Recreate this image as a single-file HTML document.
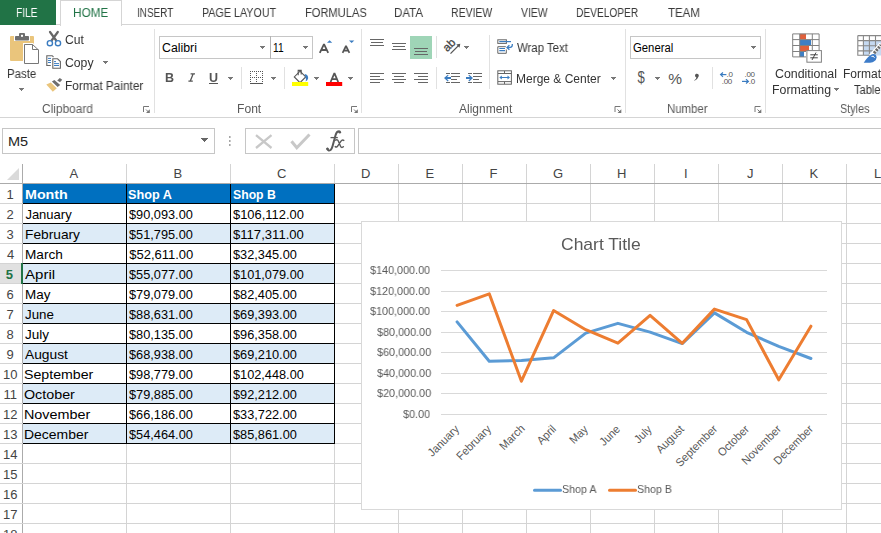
<!DOCTYPE html>
<html><head><meta charset='utf-8'><style>
html,body{margin:0;padding:0;width:881px;height:533px;overflow:hidden;background:#fff;position:relative;font-family:"Liberation Sans",sans-serif}
.t{position:absolute;white-space:pre;transform-origin:0 0;font-family:"Liberation Sans",sans-serif}
</style></head><body>
<div style='position:absolute;left:0px;top:24px;width:881px;height:1px;background:#d5d5d5;'></div><div style='position:absolute;left:0px;top:0px;width:56px;height:25px;background:#217346;'></div><div style='position:absolute;left:60px;top:0px;width:60px;height:25px;background:#fff;border:1px solid #d5d5d5;border-bottom:none'></div><div style='position:absolute;left:0px;top:117px;width:881px;height:1px;background:#d5d5d5;'></div><div style='position:absolute;left:154px;top:29px;width:1px;height:84px;background:#e1e1e1;'></div><div style='position:absolute;left:361px;top:29px;width:1px;height:84px;background:#e1e1e1;'></div><div style='position:absolute;left:625px;top:29px;width:1px;height:84px;background:#e1e1e1;'></div><div style='position:absolute;left:765px;top:29px;width:1px;height:84px;background:#e1e1e1;'></div><div style='position:absolute;left:209px;top:83px;width:9px;height:1.2px;background:#555;'></div><div style='position:absolute;left:159px;top:36px;width:154px;height:23px;border:1px solid #c6c6c6;box-sizing:border-box'></div><div style='position:absolute;left:270px;top:36px;width:1px;height:23px;background:#b4b4b4;'></div><div style='position:absolute;left:630px;top:36px;width:131px;height:23px;border:1px solid #c6c6c6;box-sizing:border-box'></div><div style='position:absolute;left:2px;top:128px;width:213px;height:26px;border:1px solid #c6c6c6;box-sizing:border-box'></div><div style='position:absolute;left:245px;top:128px;width:110px;height:26px;border:1px solid #c6c6c6;box-sizing:border-box'></div><div style='position:absolute;left:358px;top:128px;width:540px;height:26px;border:1px solid #c6c6c6;box-sizing:border-box'></div><div style='position:absolute;left:126px;top:164px;width:1px;height:369px;background:#d4d4d4;'></div><div style='position:absolute;left:230px;top:164px;width:1px;height:369px;background:#d4d4d4;'></div><div style='position:absolute;left:334px;top:164px;width:1px;height:369px;background:#d4d4d4;'></div><div style='position:absolute;left:398px;top:164px;width:1px;height:369px;background:#d4d4d4;'></div><div style='position:absolute;left:462px;top:164px;width:1px;height:369px;background:#d4d4d4;'></div><div style='position:absolute;left:526px;top:164px;width:1px;height:369px;background:#d4d4d4;'></div><div style='position:absolute;left:590px;top:164px;width:1px;height:369px;background:#d4d4d4;'></div><div style='position:absolute;left:654px;top:164px;width:1px;height:369px;background:#d4d4d4;'></div><div style='position:absolute;left:718px;top:164px;width:1px;height:369px;background:#d4d4d4;'></div><div style='position:absolute;left:782px;top:164px;width:1px;height:369px;background:#d4d4d4;'></div><div style='position:absolute;left:846px;top:164px;width:1px;height:369px;background:#d4d4d4;'></div><div style='position:absolute;left:22px;top:164px;width:1px;height:369px;background:#ababab;'></div><div style='position:absolute;left:0px;top:183px;width:881px;height:1px;background:#ababab;'></div><div style='position:absolute;left:0px;top:203px;width:881px;height:1px;background:#d4d4d4;'></div><div style='position:absolute;left:0px;top:223px;width:881px;height:1px;background:#d4d4d4;'></div><div style='position:absolute;left:0px;top:243px;width:881px;height:1px;background:#d4d4d4;'></div><div style='position:absolute;left:0px;top:263px;width:881px;height:1px;background:#d4d4d4;'></div><div style='position:absolute;left:0px;top:283px;width:881px;height:1px;background:#d4d4d4;'></div><div style='position:absolute;left:0px;top:303px;width:881px;height:1px;background:#d4d4d4;'></div><div style='position:absolute;left:0px;top:323px;width:881px;height:1px;background:#d4d4d4;'></div><div style='position:absolute;left:0px;top:343px;width:881px;height:1px;background:#d4d4d4;'></div><div style='position:absolute;left:0px;top:363px;width:881px;height:1px;background:#d4d4d4;'></div><div style='position:absolute;left:0px;top:383px;width:881px;height:1px;background:#d4d4d4;'></div><div style='position:absolute;left:0px;top:403px;width:881px;height:1px;background:#d4d4d4;'></div><div style='position:absolute;left:0px;top:423px;width:881px;height:1px;background:#d4d4d4;'></div><div style='position:absolute;left:0px;top:443px;width:881px;height:1px;background:#d4d4d4;'></div><div style='position:absolute;left:0px;top:463px;width:881px;height:1px;background:#d4d4d4;'></div><div style='position:absolute;left:0px;top:483px;width:881px;height:1px;background:#d4d4d4;'></div><div style='position:absolute;left:0px;top:503px;width:881px;height:1px;background:#d4d4d4;'></div><div style='position:absolute;left:0px;top:523px;width:881px;height:1px;background:#d4d4d4;'></div><svg style='position:absolute;left:0;top:164px' width='22' height='19'><polygon points='19,4 19,16 7,16' fill='#dadada'/></svg><div style='position:absolute;left:0px;top:264px;width:21px;height:19px;background:#e1e1e1;'></div><div style='position:absolute;left:21px;top:263px;width:2px;height:21px;background:#217346;'></div><div style='position:absolute;left:23px;top:184px;width:311px;height:19px;background:#0070c0;'></div><div style='position:absolute;left:23px;top:224px;width:311px;height:19px;background:#ddebf7;'></div><div style='position:absolute;left:23px;top:264px;width:311px;height:19px;background:#ddebf7;'></div><div style='position:absolute;left:23px;top:304px;width:311px;height:19px;background:#ddebf7;'></div><div style='position:absolute;left:23px;top:344px;width:311px;height:19px;background:#ddebf7;'></div><div style='position:absolute;left:23px;top:384px;width:311px;height:19px;background:#ddebf7;'></div><div style='position:absolute;left:23px;top:424px;width:311px;height:19px;background:#ddebf7;'></div><div style='position:absolute;left:23px;top:203px;width:312px;height:1px;background:#000;'></div><div style='position:absolute;left:23px;top:223px;width:312px;height:1px;background:#000;'></div><div style='position:absolute;left:23px;top:243px;width:312px;height:1px;background:#000;'></div><div style='position:absolute;left:23px;top:263px;width:312px;height:1px;background:#000;'></div><div style='position:absolute;left:23px;top:283px;width:312px;height:1px;background:#000;'></div><div style='position:absolute;left:23px;top:303px;width:312px;height:1px;background:#000;'></div><div style='position:absolute;left:23px;top:323px;width:312px;height:1px;background:#000;'></div><div style='position:absolute;left:23px;top:343px;width:312px;height:1px;background:#000;'></div><div style='position:absolute;left:23px;top:363px;width:312px;height:1px;background:#000;'></div><div style='position:absolute;left:23px;top:383px;width:312px;height:1px;background:#000;'></div><div style='position:absolute;left:23px;top:403px;width:312px;height:1px;background:#000;'></div><div style='position:absolute;left:23px;top:423px;width:312px;height:1px;background:#000;'></div><div style='position:absolute;left:23px;top:443px;width:312px;height:1px;background:#000;'></div><div style='position:absolute;left:126px;top:184px;width:1px;height:260px;background:#000;'></div><div style='position:absolute;left:230px;top:184px;width:1px;height:260px;background:#000;'></div><div style='position:absolute;left:334px;top:184px;width:1px;height:260px;background:#000;'></div><div style='position:absolute;left:361px;top:221px;width:481px;height:289px;background:#fff;border:1px solid #d9d9d9;box-sizing:border-box'></div><svg style='position:absolute;left:0;top:0' width='881' height='533'><rect x='441' y='414' width='386' height='1' fill='#d9d9d9'/><rect x='441' y='393' width='386' height='1' fill='#d9d9d9'/><rect x='441' y='373' width='386' height='1' fill='#d9d9d9'/><rect x='441' y='352' width='386' height='1' fill='#d9d9d9'/><rect x='441' y='332' width='386' height='1' fill='#d9d9d9'/><rect x='441' y='311' width='386' height='1' fill='#d9d9d9'/><rect x='441' y='291' width='386' height='1' fill='#d9d9d9'/><rect x='441' y='270' width='386' height='1' fill='#d9d9d9'/><polyline points='457.08,321.83 489.25,361.23 521.42,360.39 553.58,357.85 585.75,333.16 617.92,323.34 650.08,332.08 682.25,343.59 714.42,312.90 746.58,332.33 778.75,346.42 810.92,358.48' fill='none' stroke='#5b9bd5' stroke-width='3' stroke-linejoin='round' stroke-linecap='round'/><polyline points='457.08,305.36 489.25,293.84 521.42,381.23 553.58,310.53 585.75,329.74 617.92,343.12 650.08,315.39 682.25,343.31 714.42,309.12 746.58,319.65 778.75,379.81 810.92,326.19' fill='none' stroke='#ed7d31' stroke-width='3' stroke-linejoin='round' stroke-linecap='round'/><line x1='534.5' x2='560.5' y1='490.3' y2='490.3' stroke='#5b9bd5' stroke-width='3' stroke-linecap='round'/><line x1='609.5' x2='635.5' y1='490.3' y2='490.3' stroke='#ed7d31' stroke-width='3' stroke-linecap='round'/></svg><svg style='position:absolute;left:0;top:0' width='881' height='160'><path d='M10,37 a1,1 0 0 1 1,-1 H14 V41 H30 V36 H33 a1,1 0 0 1 1,1 V60 a1,1 0 0 1 -1,1 H11 a1,1 0 0 1 -1,-1 Z' fill='#eac57c'/><rect x='15' y='36' width='14' height='4.5' rx='0.8' fill='#6e6e6e'/><rect x='19' y='33' width='6' height='4' rx='1' fill='#6e6e6e'/><rect x='21' y='34.8' width='2' height='2' fill='#fff'/><path d='M23,43 H33 L39,49 V64 H23 Z' fill='#fff'/><path d='M24.5,44.5 H32.5 L38.5,50 V63.5 H24.5 Z' fill='#fff' stroke='#777' stroke-width='1'/><path d='M32.5,44.5 V49.5 H38.5' fill='none' stroke='#777' stroke-width='1'/><rect x='19' y='88' width='5' height='1' fill='#777'/><rect x='20' y='89' width='3' height='1' fill='#777'/><rect x='21' y='90' width='1' height='1' fill='#777'/><path d='M50,32 L56.2,40.5 M57.8,32 L51.6,40.5' stroke='#666' stroke-width='2.2' stroke-linecap='round'/><circle cx='49.9' cy='43.2' r='2.6' fill='#fff' stroke='#3b7cc0' stroke-width='1.4'/><circle cx='58' cy='43.2' r='2.6' fill='#fff' stroke='#3b7cc0' stroke-width='1.4'/><path d='M50.8,65.5 H46.8 V55.7 H52.2 L53.5,57' fill='none' stroke='#666' stroke-width='1.1'/><path d='M48,58.4 H51 M48,60.5 H51 M48,62.5 H51' stroke='#3b7cc0' stroke-width='1'/><path d='M52.8,58.8 H57.6 L60.4,61.5 V68.3 H52.8 Z' fill='#fff' stroke='#666' stroke-width='1.1'/><path d='M54,61.6 H56 M54,63.6 H59 M54,65.5 H59' stroke='#3b7cc0' stroke-width='1'/><rect x='103' y='61' width='5' height='1' fill='#777'/><rect x='104' y='62' width='3' height='1' fill='#777'/><rect x='105' y='63' width='1' height='1' fill='#777'/><polygon points='46.3,84.6 50.8,82.6 56.8,88.2 52.8,91.8' fill='#eac57c'/><polygon points='51.9,81.6 54.4,79.9 60.2,84.9 57.6,86.9' fill='#6e6e6e'/><polygon points='57.2,80.4 59.8,77.9 62.2,79.8 60,82.3' fill='#6e6e6e'/><path d='M143.5,112 V106.5 H149' stroke='#777' stroke-width='1' fill='none'/><polygon points='146,109.5 149.5,112.8 149.8,109.5 ' fill='none'/><polygon points='149.8,109.2 149.8,113 146,113' fill='#777'/><line x1='146' y1='109.5' x2='148.5' y2='112' stroke='#777' stroke-width='1'/><rect x='260' y='46' width='5' height='1' fill='#777'/><rect x='261' y='47' width='3' height='1' fill='#777'/><rect x='262' y='48' width='1' height='1' fill='#777'/><rect x='303' y='46' width='5' height='1' fill='#777'/><rect x='304' y='47' width='3' height='1' fill='#777'/><rect x='305' y='48' width='1' height='1' fill='#777'/><rect x='228' y='77' width='5' height='1' fill='#777'/><rect x='229' y='78' width='3' height='1' fill='#777'/><rect x='230' y='79' width='1' height='1' fill='#777'/><path d='M190.6,73.8 H195 M188.4,81.1 H192.8 M193.2,73.8 L190.3,81.1' fill='none' stroke='#555' stroke-width='1.3'/><line x1='241.5' y1='67' x2='241.5' y2='89' stroke='#e1e1e1'/><path d='M250,71h1v1h-1zM252,71h1v1h-1zM254,71h1v1h-1zM256,71h1v1h-1zM258,71h1v1h-1zM260,71h1v1h-1zM262,71h1v1h-1zM250,73h1v1h-1zM256,73h1v1h-1zM262,73h1v1h-1zM250,75h1v1h-1zM256,75h1v1h-1zM262,75h1v1h-1zM250,77h1v1h-1zM252,77h1v1h-1zM254,77h1v1h-1zM256,77h1v1h-1zM258,77h1v1h-1zM260,77h1v1h-1zM262,77h1v1h-1zM250,79h1v1h-1zM256,79h1v1h-1zM262,79h1v1h-1zM250,81h1v1h-1zM256,81h1v1h-1zM262,81h1v1h-1z' fill='#555'/><rect x='250' y='83' width='13' height='1' fill='#555'/><rect x='271' y='77' width='5' height='1' fill='#777'/><rect x='272' y='78' width='3' height='1' fill='#777'/><rect x='273' y='79' width='1' height='1' fill='#777'/><line x1='284.5' y1='67' x2='284.5' y2='89' stroke='#e1e1e1'/><path d='M300,71.2 L305.7,76.9 L300,82.6 L294.3,76.9 Z' fill='#fff' stroke='#555' stroke-width='1.1'/><path d='M298.2,75.2 V70.4 H301.2 V74.6' fill='none' stroke='#555' stroke-width='1.1'/><path d='M304.6,74 Q308.6,74.8 308.1,78.6 Q307.6,80.8 305.6,81.4 Q306.4,79 305.6,77.6 Z' fill='#3b7cc0'/><rect x='292' y='82' width='16.2' height='4' fill='#ffff00'/><rect x='314' y='77' width='5' height='1' fill='#777'/><rect x='315' y='78' width='3' height='1' fill='#777'/><rect x='316' y='79' width='1' height='1' fill='#777'/><path d='M330.6,82 L334.4,73.2 L338.2,82 M331.6,79.2 H337.2' fill='none' stroke='#555' stroke-width='1.8' stroke-linejoin='bevel'/><rect x='326' y='82' width='16.2' height='4' fill='#ff0000'/><rect x='348' y='77' width='5' height='1' fill='#777'/><rect x='349' y='78' width='3' height='1' fill='#777'/><rect x='350' y='79' width='1' height='1' fill='#777'/><path d='M319.8,52.8 L324,44.2 L328.2,52.8 M321.2,50 H326.8' fill='none' stroke='#555' stroke-width='1.8' stroke-linejoin='bevel'/><polygon points='327,42.7 332.2,42.7 329.6,40.2' fill='#3b7cc0'/><path d='M342.6,52.8 L346,46 L349.4,52.8 M343.6,50.6 H348.4' fill='none' stroke='#555' stroke-width='1.7' stroke-linejoin='bevel'/><polygon points='349,40.4 354.3,40.4 351.65,43' fill='#3b7cc0'/><path d='M351.5,112 V106.5 H357' stroke='#777' stroke-width='1' fill='none'/><polygon points='354,109.5 357.5,112.8 357.8,109.5 ' fill='none'/><polygon points='357.8,109.2 357.8,113 354,113' fill='#777'/><line x1='354' y1='109.5' x2='356.5' y2='112' stroke='#777' stroke-width='1'/><rect x='370' y='39' width='14' height='1' fill='#666'/><rect x='371' y='42' width='12' height='1' fill='#666'/><rect x='370' y='45' width='14' height='1' fill='#666'/><rect x='392' y='43' width='14' height='1' fill='#666'/><rect x='393' y='46' width='12' height='1' fill='#666'/><rect x='392' y='49' width='14' height='1' fill='#666'/><rect x='410' y='36' width='22' height='23' fill='#9fd5b7'/><rect x='414' y='48' width='14' height='1' fill='#666'/><rect x='415' y='51' width='12' height='1' fill='#666'/><rect x='414' y='54' width='14' height='1' fill='#666'/><line x1='436.5' y1='36' x2='436.5' y2='58' stroke='#e1e1e1'/><rect x='370' y='73' width='14' height='1' fill='#666'/><rect x='392' y='73' width='14' height='1' fill='#666'/><rect x='414' y='73' width='14' height='1' fill='#666'/><rect x='370' y='79' width='14' height='1' fill='#666'/><rect x='392' y='79' width='14' height='1' fill='#666'/><rect x='414' y='79' width='14' height='1' fill='#666'/><rect x='370' y='76' width='10' height='1' fill='#666'/><rect x='394' y='76' width='10' height='1' fill='#666'/><rect x='418' y='76' width='10' height='1' fill='#666'/><rect x='370' y='82' width='10' height='1' fill='#666'/><rect x='394' y='82' width='10' height='1' fill='#666'/><rect x='418' y='82' width='10' height='1' fill='#666'/><line x1='436.5' y1='67' x2='436.5' y2='89' stroke='#e1e1e1'/><text x='0' y='0' transform='translate(447.3,52.3) rotate(-45)' font-family='Liberation Sans' font-size='11.5' fill='#444' stroke='#444' stroke-width='0.3'>ab</text><path d='M450.5,53.6 L459.2,44.9' stroke='#555' stroke-width='1.3'/><polygon points='460.3,43.8 456.3,44.6 459.5,47.8' fill='#555'/><rect x='464' y='46' width='5' height='1' fill='#777'/><rect x='465' y='47' width='3' height='1' fill='#777'/><rect x='466' y='48' width='1' height='1' fill='#777'/><line x1='489.5' y1='35' x2='489.5' y2='89' stroke='#e1e1e1'/><rect x='446' y='73' width='4' height='1' fill='#666'/><rect x='446' y='82' width='4' height='1' fill='#666'/><rect x='451' y='73' width='9' height='1' fill='#666'/><rect x='451' y='76' width='9' height='1' fill='#666'/><rect x='451' y='79' width='6' height='1' fill='#666'/><rect x='451' y='82' width='9' height='1' fill='#666'/><rect x='468' y='73' width='4' height='1' fill='#666'/><rect x='468' y='82' width='4' height='1' fill='#666'/><rect x='473' y='73' width='9' height='1' fill='#666'/><rect x='473' y='76' width='9' height='1' fill='#666'/><rect x='473' y='79' width='6' height='1' fill='#666'/><rect x='473' y='82' width='9' height='1' fill='#666'/><path d='M444,78 L447.8,74.8 L448.6,75.6 L447,77.1 H451 V79.1 H447 L448.6,80.6 L447.8,81.4 Z' fill='#3b7cc0'/><path d='M473,78 L469.2,74.8 L468.4,75.6 L470,77.1 H466 V79.1 H470 L468.4,80.6 L469.2,81.4 Z' fill='#3b7cc0'/><rect x='497.8' y='39.8' width='8.6' height='3.6' fill='none' stroke='#666' stroke-width='1'/><line x1='499.3' y1='41.6' x2='511' y2='41.6' stroke='#3b7cc0' stroke-width='1.2'/><path d='M505.8,46.7 H497.8 V53.3 H506.3 V49.5' fill='none' stroke='#666' stroke-width='1'/><path d='M499.3,48.5 H505 M499.3,50.6 H505' stroke='#3b7cc0' stroke-width='1.1'/><path d='M512.3,44 V45 Q512.3,47.6 508.6,47.6 H507.2' fill='none' stroke='#3b7cc0' stroke-width='1.3'/><path d='M509.4,45.2 L507,47.5 L509.4,49.8' fill='none' stroke='#3b7cc0' stroke-width='1.3'/><rect x='497.8' y='70.8' width='13.6' height='13.4' fill='none' stroke='#666' stroke-width='1'/><path d='M498,73.5 H511.5 M498,81.6 H511.5 M504.5,71 V73.5 M504.5,81.6 V84' stroke='#666' stroke-width='1'/><path d='M500.5,77.5 H508.8' stroke='#3b7cc0' stroke-width='1'/><polygon points='499.3,77.5 501.8,75.6 501.8,79.4' fill='#3b7cc0'/><polygon points='510,77.5 507.5,75.6 507.5,79.4' fill='#3b7cc0'/><rect x='611' y='77' width='5' height='1' fill='#777'/><rect x='612' y='78' width='3' height='1' fill='#777'/><rect x='613' y='79' width='1' height='1' fill='#777'/><path d='M615.0,112 V106.5 H620.5' stroke='#777' stroke-width='1' fill='none'/><polygon points='617.5,109.5 621.0,112.8 621.3,109.5 ' fill='none'/><polygon points='621.3,109.2 621.3,113 617.5,113' fill='#777'/><line x1='617.5' y1='109.5' x2='620.0' y2='112' stroke='#777' stroke-width='1'/><rect x='751' y='46' width='5' height='1' fill='#777'/><rect x='752' y='47' width='3' height='1' fill='#777'/><rect x='753' y='48' width='1' height='1' fill='#777'/><rect x='655' y='77' width='5' height='1' fill='#777'/><rect x='656' y='78' width='3' height='1' fill='#777'/><rect x='657' y='79' width='1' height='1' fill='#777'/><line x1='712.5' y1='67' x2='712.5' y2='89' stroke='#e1e1e1'/><text x='0' y='0' transform='translate(637.6,83.2) scale(0.82,1)' font-family='Liberation Sans' font-size='16' fill='#555'>$</text><text x='668.2' y='84' font-family='Liberation Sans' font-size='15.5' fill='#555'>%</text><path d='M696.2,73.8 a1.9,1.9 0 0 1 2.4,2.6 Q697.6,79.2 694.6,80.8 L694.3,80.2 Q696.3,78.8 696.4,77.4 a1.9,1.9 0 0 1 -0.2,-3.6 Z' fill='#555'/><text x='726.5' y='76.5' font-family='Liberation Sans' font-size='8' fill='#555' letter-spacing='-0.3'>.0</text><text x='721.8' y='84' font-family='Liberation Sans' font-size='8' fill='#555' letter-spacing='-0.3'>.00</text><path d='M721,74.6 H726.4' stroke='#3b7cc0' stroke-width='1.2'/><path d='M723,72.5 L720.6,74.6 L723,76.7' fill='none' stroke='#3b7cc0' stroke-width='1.2'/><text x='744.5' y='76.5' font-family='Liberation Sans' font-size='8' fill='#555' letter-spacing='-0.3'>.00</text><text x='748.8' y='84' font-family='Liberation Sans' font-size='8' fill='#555' letter-spacing='-0.3'>.0</text><path d='M742,81.4 H748' stroke='#3b7cc0' stroke-width='1.2'/><path d='M746,79.3 L748.4,81.4 L746,83.5' fill='none' stroke='#3b7cc0' stroke-width='1.2'/><path d='M755.0,112 V106.5 H760.5' stroke='#777' stroke-width='1' fill='none'/><polygon points='757.5,109.5 761.0,112.8 761.3,109.5 ' fill='none'/><polygon points='761.3,109.2 761.3,113 757.5,113' fill='#777'/><line x1='757.5' y1='109.5' x2='760.0' y2='112' stroke='#777' stroke-width='1'/><rect x='800' y='33.8' width='6' height='5.6' fill='#e0613c'/><rect x='800' y='40' width='11' height='5' fill='#3f7fc4'/><rect x='800' y='46' width='9' height='5' fill='#e0613c'/><rect x='800' y='52' width='4' height='5' fill='#3f7fc4'/><path d='M792.7,33.9 H819.1 V50 M792.7,33.9 V56.9 H806 M792.7,39.6 H819.1 M792.7,45.5 H819.1 M792.7,51.5 H806 M799.7,33.9 V56.9 M812.3,33.9 V50' fill='none' stroke='#808080' stroke-width='1'/><rect x='806.9' y='50.6' width='14.5' height='11.6' fill='#fff' stroke='#808080' stroke-width='1'/><path d='M810.3,54.8 H817.8 M810.3,57.8 H817.8 M816,52.5 L812,60' stroke='#333' stroke-width='0.9'/><rect x='834' y='88' width='5' height='1' fill='#777'/><rect x='835' y='89' width='3' height='1' fill='#777'/><rect x='836' y='90' width='1' height='1' fill='#777'/><rect x='863.5' y='40.5' width='18' height='15' fill='#c5d9f1'/><path d='M857.8,35.6 H881 M857.8,35.6 V55.3 H870 M857.8,40.6 H881 M857.8,45.8 H881 M857.8,50.9 H874 M863.4,35.6 V55.3 M869.4,35.6 V55 M875.5,35.6 V50' fill='none' stroke='#888' stroke-width='1.1'/><path d='M870.5,56 L881,44' stroke='#fff' stroke-width='4'/><path d='M874,53.2 L881,45' stroke='#6e6e6e' stroke-width='3' stroke-dasharray='2.2,1'/><path d='M863.7,62.8 Q868,56 872,54.2 Q876.5,53.5 876.6,57.5 Q876,62 870,62.8 Z' fill='#3d7cc9'/><path d='M871.5,56.5 Q873.5,55.2 874.5,57.8' fill='none' stroke='#fff' stroke-width='1'/><rect x='201' y='138' width='7' height='1' fill='#666'/><rect x='202' y='139' width='5' height='1' fill='#666'/><rect x='203' y='140' width='3' height='1' fill='#666'/><rect x='204' y='141' width='1' height='1' fill='#666'/><path d='M229,136.2h1.6v1.6h-1.6z M229,140.2h1.6v1.6h-1.6z M229,144.2h1.6v1.6h-1.6z' fill='#888'/><path d='M256,135.2 L271.5,148 M271.5,135.2 L256,148' stroke='#c8c8c8' stroke-width='2.3'/><path d='M291.5,141.2 L296.8,147.8 L309.5,134.5' fill='none' stroke='#c8c8c8' stroke-width='3'/><path d='M327.2,148.6 Q328,151.6 330.6,150 Q331.8,149 332.6,146 L335.6,135 Q336.8,131 339.6,131.4' fill='none' stroke='#5a5a5a' stroke-width='2' stroke-linecap='round'/><circle cx='327.6' cy='149' r='1.3' fill='#5a5a5a'/><circle cx='339.8' cy='132.2' r='1.3' fill='#5a5a5a'/><path d='M330.5,137.6 H337.8' stroke='#5a5a5a' stroke-width='1.3'/><path d='M335.6,140.2 Q337.4,139 338.4,141.2 L340.4,146 Q341.4,148.4 343.4,146.8 M343.8,140.4 Q342.2,139.4 340.8,141.4 L337.8,145.8 Q336.6,147.8 335.2,146.6' fill='none' stroke='#5a5a5a' stroke-width='1.4' stroke-linecap='round'/></svg>
<div class='t' style='left:15.75px;top:7.00px;font-size:12px;line-height:12px;font-weight:400;font-style:normal;color:#fff;transform:scaleX(0.8500);will-change:transform;'>FILE</div><div class='t' style='left:72.72px;top:7.00px;font-size:12px;line-height:12px;font-weight:400;font-style:normal;color:#217346;transform:scaleX(0.9800);will-change:transform;'>HOME</div><div class='t' style='left:136.97px;top:7.00px;font-size:12px;line-height:12px;font-weight:400;font-style:normal;color:#3a3a3a;transform:scaleX(0.8279);will-change:transform;'>INSERT</div><div class='t' style='left:201.81px;top:7.00px;font-size:12px;line-height:12px;font-weight:400;font-style:normal;color:#3a3a3a;transform:scaleX(0.8939);will-change:transform;'>PAGE LAYOUT</div><div class='t' style='left:304.67px;top:7.00px;font-size:12px;line-height:12px;font-weight:400;font-style:normal;color:#3a3a3a;transform:scaleX(0.9262);will-change:transform;'>FORMULAS</div><div class='t' style='left:394.24px;top:7.00px;font-size:12px;line-height:12px;font-weight:400;font-style:normal;color:#3a3a3a;transform:scaleX(0.9586);will-change:transform;'>DATA</div><div class='t' style='left:450.93px;top:7.00px;font-size:12px;line-height:12px;font-weight:400;font-style:normal;color:#3a3a3a;transform:scaleX(0.8717);will-change:transform;'>REVIEW</div><div class='t' style='left:521.00px;top:7.00px;font-size:12px;line-height:12px;font-weight:400;font-style:normal;color:#3a3a3a;transform:scaleX(0.8710);will-change:transform;'>VIEW</div><div class='t' style='left:576.45px;top:7.00px;font-size:12px;line-height:12px;font-weight:400;font-style:normal;color:#3a3a3a;transform:scaleX(0.8472);will-change:transform;'>DEVELOPER</div><div class='t' style='left:668.30px;top:7.00px;font-size:12px;line-height:12px;font-weight:400;font-style:normal;color:#3a3a3a;transform:scaleX(0.9594);will-change:transform;'>TEAM</div><div class='t' style='left:41.81px;top:103.00px;font-size:12px;line-height:12px;font-weight:400;font-style:normal;color:#5a5a5a;transform:scaleX(0.9900);will-change:transform;'>Clipboard</div><div class='t' style='left:237.49px;top:103.00px;font-size:12px;line-height:12px;font-weight:400;font-style:normal;color:#5a5a5a;transform:scaleX(1.0087);will-change:transform;'>Font</div><div class='t' style='left:459.10px;top:103.00px;font-size:12px;line-height:12px;font-weight:400;font-style:normal;color:#5a5a5a;will-change:transform;'>Alignment</div><div class='t' style='left:666.85px;top:103.00px;font-size:12px;line-height:12px;font-weight:400;font-style:normal;color:#5a5a5a;transform:scaleX(0.9500);will-change:transform;'>Number</div><div class='t' style='left:840.10px;top:103.00px;font-size:12px;line-height:12px;font-weight:400;font-style:normal;color:#5a5a5a;transform:scaleX(0.9032);will-change:transform;'>Styles</div><div class='t' style='left:7.45px;top:68.00px;font-size:12px;line-height:12px;font-weight:400;font-style:normal;color:#333;transform:scaleX(0.9517);will-change:transform;'>Paste</div><div class='t' style='left:64.89px;top:34.00px;font-size:12px;line-height:12px;font-weight:400;font-style:normal;color:#333;transform:scaleX(1.0111);will-change:transform;'>Cut</div><div class='t' style='left:64.88px;top:57.00px;font-size:12px;line-height:12px;font-weight:400;font-style:normal;color:#333;transform:scaleX(1.0185);will-change:transform;'>Copy</div><div class='t' style='left:64.91px;top:80.00px;font-size:12px;line-height:12px;font-weight:400;font-style:normal;color:#333;transform:scaleX(0.9885);will-change:transform;'>Format Painter</div><div class='t' style='left:516.50px;top:41.70px;font-size:12px;line-height:12px;font-weight:400;font-style:normal;color:#333;transform:scaleX(0.9500);will-change:transform;'>Wrap Text</div><div class='t' style='left:515.50px;top:73.00px;font-size:12px;line-height:12px;font-weight:400;font-style:normal;color:#333;will-change:transform;'>Merge &amp; Center</div><div class='t' style='left:774.67px;top:68.00px;font-size:12px;line-height:12px;font-weight:400;font-style:normal;color:#333;transform:scaleX(1.0322);will-change:transform;'>Conditional</div><div class='t' style='left:771.77px;top:83.70px;font-size:12px;line-height:12px;font-weight:400;font-style:normal;color:#333;transform:scaleX(1.0286);will-change:transform;'>Formatting</div><div class='t' style='left:843.00px;top:68.00px;font-size:12px;line-height:12px;font-weight:400;font-style:normal;color:#333;will-change:transform;'>Format</div><div class='t' style='left:853.60px;top:83.70px;font-size:12px;line-height:12px;font-weight:400;font-style:normal;color:#333;transform:scaleX(0.9250);will-change:transform;'>Table</div><div class='t' style='left:164.86px;top:71.70px;font-size:12px;line-height:12px;font-weight:700;font-style:normal;color:#555;transform:scaleX(1.0429);will-change:transform;'>B</div><div class='t' style='left:208.96px;top:71.70px;font-size:12px;line-height:12px;font-weight:700;font-style:normal;color:#555;transform:scaleX(1.0429);will-change:transform;'>U</div><div class='t' style='left:161.51px;top:41.80px;font-size:12.5px;line-height:12.5px;font-weight:400;font-style:normal;color:#000;transform:scaleX(0.9853);'>Calibri</div><div class='t' style='left:273.08px;top:41.80px;font-size:12.5px;line-height:12.5px;font-weight:400;font-style:normal;color:#000;transform:scaleX(0.8167);'>11</div><div class='t' style='left:632.80px;top:41.70px;font-size:12.5px;line-height:12.5px;font-weight:400;font-style:normal;color:#000;transform:scaleX(0.9047);'>General</div><div class='t' style='left:8.04px;top:136.00px;font-size:12.5px;line-height:12.5px;font-weight:400;font-style:normal;color:#222;transform:scaleX(1.1625);'>M5</div><div class='t' style='left:69.50px;top:167.00px;font-size:13px;line-height:13px;font-weight:400;font-style:normal;color:#444;'>A</div><div class='t' style='left:173.50px;top:167.00px;font-size:13px;line-height:13px;font-weight:400;font-style:normal;color:#444;'>B</div><div class='t' style='left:277.00px;top:167.00px;font-size:13px;line-height:13px;font-weight:400;font-style:normal;color:#444;'>C</div><div class='t' style='left:361.00px;top:167.00px;font-size:13px;line-height:13px;font-weight:400;font-style:normal;color:#444;'>D</div><div class='t' style='left:425.50px;top:167.00px;font-size:13px;line-height:13px;font-weight:400;font-style:normal;color:#444;'>E</div><div class='t' style='left:489.50px;top:167.00px;font-size:13px;line-height:13px;font-weight:400;font-style:normal;color:#444;'>F</div><div class='t' style='left:553.00px;top:167.00px;font-size:13px;line-height:13px;font-weight:400;font-style:normal;color:#444;'>G</div><div class='t' style='left:617.00px;top:167.00px;font-size:13px;line-height:13px;font-weight:400;font-style:normal;color:#444;'>H</div><div class='t' style='left:684.00px;top:167.00px;font-size:13px;line-height:13px;font-weight:400;font-style:normal;color:#444;'>I</div><div class='t' style='left:747.00px;top:167.00px;font-size:13px;line-height:13px;font-weight:400;font-style:normal;color:#444;'>J</div><div class='t' style='left:809.50px;top:167.00px;font-size:13px;line-height:13px;font-weight:400;font-style:normal;color:#444;'>K</div><div class='t' style='left:874.00px;top:167.00px;font-size:13px;line-height:13px;font-weight:400;font-style:normal;color:#444;'>L</div><div class='t' style='left:6.50px;top:188.00px;font-size:13px;line-height:13px;font-weight:400;font-style:normal;color:#444;'>1</div><div class='t' style='left:6.50px;top:208.00px;font-size:13px;line-height:13px;font-weight:400;font-style:normal;color:#444;'>2</div><div class='t' style='left:6.50px;top:228.00px;font-size:13px;line-height:13px;font-weight:400;font-style:normal;color:#444;'>3</div><div class='t' style='left:7.00px;top:248.00px;font-size:13px;line-height:13px;font-weight:400;font-style:normal;color:#444;'>4</div><div class='t' style='left:5.75px;top:268.00px;font-size:13px;line-height:13px;font-weight:700;font-style:normal;color:#217346;'>5</div><div class='t' style='left:6.50px;top:288.00px;font-size:13px;line-height:13px;font-weight:400;font-style:normal;color:#444;'>6</div><div class='t' style='left:6.50px;top:308.00px;font-size:13px;line-height:13px;font-weight:400;font-style:normal;color:#444;'>7</div><div class='t' style='left:6.50px;top:328.00px;font-size:13px;line-height:13px;font-weight:400;font-style:normal;color:#444;'>8</div><div class='t' style='left:6.50px;top:348.00px;font-size:13px;line-height:13px;font-weight:400;font-style:normal;color:#444;'>9</div><div class='t' style='left:3.00px;top:368.00px;font-size:13px;line-height:13px;font-weight:400;font-style:normal;color:#444;'>10</div><div class='t' style='left:3.50px;top:388.00px;font-size:13px;line-height:13px;font-weight:400;font-style:normal;color:#444;'>11</div><div class='t' style='left:3.00px;top:408.00px;font-size:13px;line-height:13px;font-weight:400;font-style:normal;color:#444;'>12</div><div class='t' style='left:3.00px;top:428.00px;font-size:13px;line-height:13px;font-weight:400;font-style:normal;color:#444;'>13</div><div class='t' style='left:3.00px;top:448.00px;font-size:13px;line-height:13px;font-weight:400;font-style:normal;color:#444;'>14</div><div class='t' style='left:3.00px;top:468.00px;font-size:13px;line-height:13px;font-weight:400;font-style:normal;color:#444;'>15</div><div class='t' style='left:3.00px;top:488.00px;font-size:13px;line-height:13px;font-weight:400;font-style:normal;color:#444;'>16</div><div class='t' style='left:3.00px;top:508.00px;font-size:13px;line-height:13px;font-weight:400;font-style:normal;color:#444;'>17</div><div class='t' style='left:3.00px;top:528.00px;font-size:13px;line-height:13px;font-weight:400;font-style:normal;color:#444;'>18</div><div class='t' style='left:24.70px;top:188.00px;font-size:13px;line-height:13px;font-weight:700;font-style:normal;color:#fff;transform:scaleX(1.0973);'>Month</div><div class='t' style='left:128.23px;top:188.00px;font-size:13px;line-height:13px;font-weight:700;font-style:normal;color:#fff;transform:scaleX(0.9727);'>Shop A</div><div class='t' style='left:232.66px;top:188.00px;font-size:13px;line-height:13px;font-weight:700;font-style:normal;color:#fff;transform:scaleX(0.9409);'>Shop B</div><div class='t' style='left:25.40px;top:208.00px;font-size:13px;line-height:13px;font-weight:400;font-style:normal;color:#000;'>January</div><div class='t' style='left:129.20px;top:208.00px;font-size:13px;line-height:13px;font-weight:400;font-style:normal;color:#000;transform:scaleX(0.9815);'>$90,093.00</div><div class='t' style='left:233.10px;top:208.00px;font-size:13px;line-height:13px;font-weight:400;font-style:normal;color:#000;transform:scaleX(0.9930);'>$106,112.00</div><div class='t' style='left:24.74px;top:228.00px;font-size:13px;line-height:13px;font-weight:400;font-style:normal;color:#000;transform:scaleX(1.0569);'>February</div><div class='t' style='left:129.20px;top:228.00px;font-size:13px;line-height:13px;font-weight:400;font-style:normal;color:#000;transform:scaleX(0.9815);'>$51,795.00</div><div class='t' style='left:233.10px;top:228.00px;font-size:13px;line-height:13px;font-weight:400;font-style:normal;color:#000;transform:scaleX(1.0071);'>$117,311.00</div><div class='t' style='left:24.55px;top:248.00px;font-size:13px;line-height:13px;font-weight:400;font-style:normal;color:#000;transform:scaleX(1.0457);'>March</div><div class='t' style='left:129.20px;top:248.00px;font-size:13px;line-height:13px;font-weight:400;font-style:normal;color:#000;'>$52,611.00</div><div class='t' style='left:233.10px;top:248.00px;font-size:13px;line-height:13px;font-weight:400;font-style:normal;color:#000;transform:scaleX(0.9815);'>$32,345.00</div><div class='t' style='left:25.30px;top:268.00px;font-size:13px;line-height:13px;font-weight:400;font-style:normal;color:#000;transform:scaleX(1.1560);'>April</div><div class='t' style='left:129.20px;top:268.00px;font-size:13px;line-height:13px;font-weight:400;font-style:normal;color:#000;transform:scaleX(0.9815);'>$55,077.00</div><div class='t' style='left:233.10px;top:268.00px;font-size:13px;line-height:13px;font-weight:400;font-style:normal;color:#000;transform:scaleX(0.9792);'>$101,079.00</div><div class='t' style='left:24.57px;top:288.00px;font-size:13px;line-height:13px;font-weight:400;font-style:normal;color:#000;transform:scaleX(1.0333);'>May</div><div class='t' style='left:129.20px;top:288.00px;font-size:13px;line-height:13px;font-weight:400;font-style:normal;color:#000;transform:scaleX(0.9815);'>$79,079.00</div><div class='t' style='left:233.10px;top:288.00px;font-size:13px;line-height:13px;font-weight:400;font-style:normal;color:#000;transform:scaleX(0.9815);'>$82,405.00</div><div class='t' style='left:24.70px;top:308.00px;font-size:13px;line-height:13px;font-weight:400;font-style:normal;color:#000;transform:scaleX(1.0250);'>June</div><div class='t' style='left:129.20px;top:308.00px;font-size:13px;line-height:13px;font-weight:400;font-style:normal;color:#000;transform:scaleX(0.9815);'>$88,631.00</div><div class='t' style='left:233.10px;top:308.00px;font-size:13px;line-height:13px;font-weight:400;font-style:normal;color:#000;transform:scaleX(0.9815);'>$69,393.00</div><div class='t' style='left:24.70px;top:328.00px;font-size:13px;line-height:13px;font-weight:400;font-style:normal;color:#000;transform:scaleX(1.0391);'>July</div><div class='t' style='left:129.20px;top:328.00px;font-size:13px;line-height:13px;font-weight:400;font-style:normal;color:#000;transform:scaleX(0.9815);'>$80,135.00</div><div class='t' style='left:233.10px;top:328.00px;font-size:13px;line-height:13px;font-weight:400;font-style:normal;color:#000;transform:scaleX(0.9815);'>$96,358.00</div><div class='t' style='left:25.20px;top:348.00px;font-size:13px;line-height:13px;font-weight:400;font-style:normal;color:#000;transform:scaleX(1.0600);'>August</div><div class='t' style='left:129.20px;top:348.00px;font-size:13px;line-height:13px;font-weight:400;font-style:normal;color:#000;transform:scaleX(0.9815);'>$68,938.00</div><div class='t' style='left:233.10px;top:348.00px;font-size:13px;line-height:13px;font-weight:400;font-style:normal;color:#000;transform:scaleX(0.9815);'>$69,210.00</div><div class='t' style='left:24.11px;top:368.00px;font-size:13px;line-height:13px;font-weight:400;font-style:normal;color:#000;transform:scaleX(1.0905);'>September</div><div class='t' style='left:129.20px;top:368.00px;font-size:13px;line-height:13px;font-weight:400;font-style:normal;color:#000;transform:scaleX(0.9815);'>$98,779.00</div><div class='t' style='left:233.10px;top:368.00px;font-size:13px;line-height:13px;font-weight:400;font-style:normal;color:#000;transform:scaleX(0.9792);'>$102,448.00</div><div class='t' style='left:24.10px;top:388.00px;font-size:13px;line-height:13px;font-weight:400;font-style:normal;color:#000;transform:scaleX(1.1000);'>October</div><div class='t' style='left:129.20px;top:388.00px;font-size:13px;line-height:13px;font-weight:400;font-style:normal;color:#000;transform:scaleX(0.9815);'>$79,885.00</div><div class='t' style='left:233.10px;top:388.00px;font-size:13px;line-height:13px;font-weight:400;font-style:normal;color:#000;transform:scaleX(0.9815);'>$92,212.00</div><div class='t' style='left:24.09px;top:408.00px;font-size:13px;line-height:13px;font-weight:400;font-style:normal;color:#000;transform:scaleX(1.1051);'>November</div><div class='t' style='left:129.20px;top:408.00px;font-size:13px;line-height:13px;font-weight:400;font-style:normal;color:#000;transform:scaleX(0.9815);'>$66,186.00</div><div class='t' style='left:233.10px;top:408.00px;font-size:13px;line-height:13px;font-weight:400;font-style:normal;color:#000;transform:scaleX(0.9815);'>$33,722.00</div><div class='t' style='left:24.13px;top:428.00px;font-size:13px;line-height:13px;font-weight:400;font-style:normal;color:#000;transform:scaleX(1.0729);'>December</div><div class='t' style='left:129.20px;top:428.00px;font-size:13px;line-height:13px;font-weight:400;font-style:normal;color:#000;transform:scaleX(0.9815);'>$54,464.00</div><div class='t' style='left:233.10px;top:428.00px;font-size:13px;line-height:13px;font-weight:400;font-style:normal;color:#000;transform:scaleX(0.9815);'>$85,861.00</div><div class='t' style='left:560.77px;top:236.00px;font-size:17px;line-height:17px;font-weight:400;font-style:normal;color:#595959;transform:scaleX(1.0289);will-change:transform;'>Chart Title</div><div class='t' style='left:402.94px;top:409.40px;font-size:11.5px;line-height:11.5px;font-weight:400;font-style:normal;color:#595959;transform:scaleX(0.9400);will-change:transform;'>$0.00</div><div class='t' style='left:376.62px;top:388.40px;font-size:11.5px;line-height:11.5px;font-weight:400;font-style:normal;color:#595959;transform:scaleX(0.9400);will-change:transform;'>$20,000.00</div><div class='t' style='left:376.62px;top:368.40px;font-size:11.5px;line-height:11.5px;font-weight:400;font-style:normal;color:#595959;transform:scaleX(0.9400);will-change:transform;'>$40,000.00</div><div class='t' style='left:376.62px;top:347.40px;font-size:11.5px;line-height:11.5px;font-weight:400;font-style:normal;color:#595959;transform:scaleX(0.9400);will-change:transform;'>$60,000.00</div><div class='t' style='left:376.62px;top:327.40px;font-size:11.5px;line-height:11.5px;font-weight:400;font-style:normal;color:#595959;transform:scaleX(0.9400);will-change:transform;'>$80,000.00</div><div class='t' style='left:370.04px;top:306.40px;font-size:11.5px;line-height:11.5px;font-weight:400;font-style:normal;color:#595959;transform:scaleX(0.9400);will-change:transform;'>$100,000.00</div><div class='t' style='left:370.04px;top:286.40px;font-size:11.5px;line-height:11.5px;font-weight:400;font-style:normal;color:#595959;transform:scaleX(0.9400);will-change:transform;'>$120,000.00</div><div class='t' style='left:370.04px;top:265.40px;font-size:11.5px;line-height:11.5px;font-weight:400;font-style:normal;color:#595959;transform:scaleX(0.9400);will-change:transform;'>$140,000.00</div><div class='t' style='left:562.47px;top:484.20px;font-size:11.5px;line-height:11.5px;font-weight:400;font-style:normal;color:#595959;transform:scaleX(0.9278);will-change:transform;'>Shop A</div><div class='t' style='left:637.17px;top:484.20px;font-size:11.5px;line-height:11.5px;font-weight:400;font-style:normal;color:#595959;transform:scaleX(0.9278);will-change:transform;'>Shop B</div><div class='t' style='left:416.28px;top:422.30px;font-size:11.5px;line-height:11.5px;color:#595959;transform-origin:41px 5.0px;transform:rotate(-45deg) scaleX(0.95)'>January</div><div class='t' style='left:443.45px;top:422.30px;font-size:11.5px;line-height:11.5px;color:#595959;transform-origin:46px 5.0px;transform:rotate(-45deg) scaleX(0.95)'>February</div><div class='t' style='left:490.62px;top:422.30px;font-size:11.5px;line-height:11.5px;color:#595959;transform-origin:31px 5.0px;transform:rotate(-45deg) scaleX(0.95)'>March</div><div class='t' style='left:530.78px;top:422.30px;font-size:11.5px;line-height:11.5px;color:#595959;transform-origin:23px 5.0px;transform:rotate(-45deg) scaleX(0.95)'>April</div><div class='t' style='left:563.95px;top:422.30px;font-size:11.5px;line-height:11.5px;color:#595959;transform-origin:22px 5.0px;transform:rotate(-45deg) scaleX(0.95)'>May</div><div class='t' style='left:593.12px;top:422.30px;font-size:11.5px;line-height:11.5px;color:#595959;transform-origin:25px 5.0px;transform:rotate(-45deg) scaleX(0.95)'>June</div><div class='t' style='left:629.28px;top:422.30px;font-size:11.5px;line-height:11.5px;color:#595959;transform-origin:21px 5.0px;transform:rotate(-45deg) scaleX(0.95)'>July</div><div class='t' style='left:646.45px;top:422.30px;font-size:11.5px;line-height:11.5px;color:#595959;transform-origin:36px 5.0px;transform:rotate(-45deg) scaleX(0.95)'>August</div><div class='t' style='left:658.62px;top:422.30px;font-size:11.5px;line-height:11.5px;color:#595959;transform-origin:56px 5.0px;transform:rotate(-45deg) scaleX(0.95)'>September</div><div class='t' style='left:705.78px;top:422.30px;font-size:11.5px;line-height:11.5px;color:#595959;transform-origin:41px 5.0px;transform:rotate(-45deg) scaleX(0.95)'>October</div><div class='t' style='left:725.95px;top:422.30px;font-size:11.5px;line-height:11.5px;color:#595959;transform-origin:53px 5.0px;transform:rotate(-45deg) scaleX(0.95)'>November</div><div class='t' style='left:758.12px;top:422.30px;font-size:11.5px;line-height:11.5px;color:#595959;transform-origin:53px 5.0px;transform:rotate(-45deg) scaleX(0.95)'>December</div>
</body></html>
